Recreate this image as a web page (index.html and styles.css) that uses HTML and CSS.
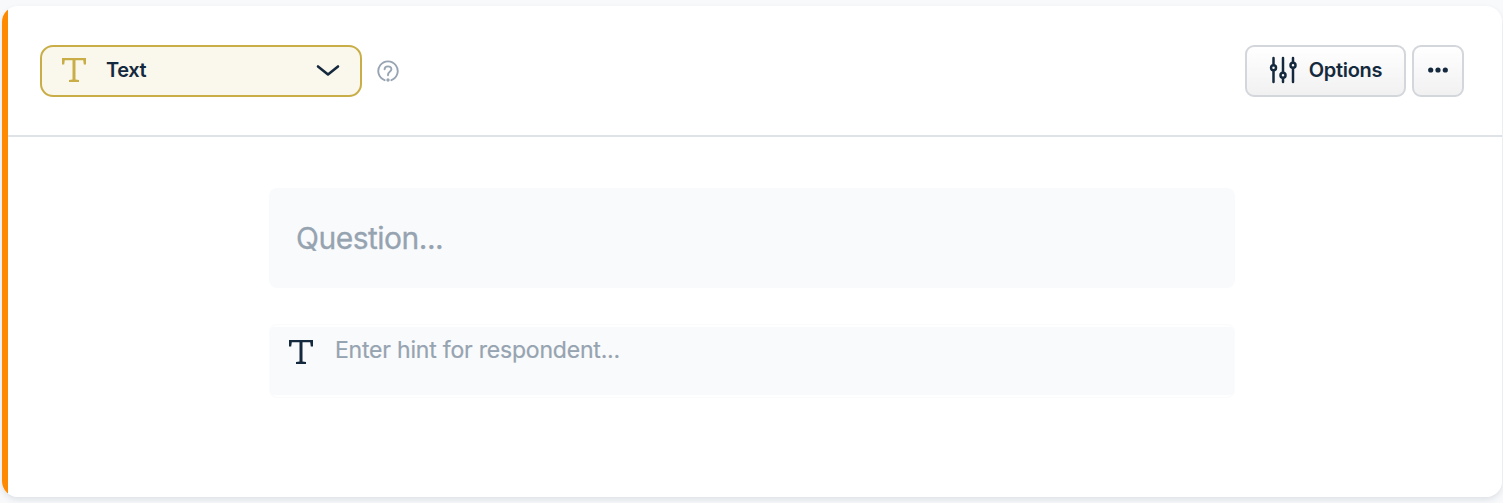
FILE: index.html
```html
<!doctype html>
<html lang="en">

<head>
    <meta charset="UTF-8" />
    <meta name="viewport" content="width=device-width, initial-scale=1.0" />
    <title>Question editor</title>
    <link rel="stylesheet" href="styles.css">
</head>

<body>
    <div class="question-card">
        <!-- header -->
        <div class="card-header">
            <button type="button" class="type-select">
                <svg class="type-icon" width="26" height="26" viewBox="0 0 26 26">
                    <path d="M1 1H25V7.5H22.8L22.2 3.2H14.5V22.6L18 23V25H8V23L11.5 22.6V3.2H3.8L3.2 7.5H1Z" />
                </svg>
                <span class="type-label">Text</span>
                <svg class="chevron" width="24" height="14" viewBox="0 0 24 14">
                    <path d="M2 2.5L12 10.5L22 2.5" />
                </svg>
            </button>
            <svg class="help-icon" width="22" height="22" viewBox="0 0 22 22">
                <path d="M7.6 20.2A9.7 9.7 0 1 1 14.4 20.2" />
                <path d="M7.6 9.2C7.6 5.4 14.4 5.4 14.4 9.2C14.4 11.8 11 11.4 11 15.2" />
                <circle cx="11" cy="20" r="1.7" />
            </svg>
            <div class="header-actions">
                <button type="button" class="btn btn-options">
                    <svg class="sliders-icon" width="28" height="28" viewBox="0 0 28 28">
                        <path d="M4.5 2V9M4.5 14.4V26M14 2V16.5M14 22V26M24 2V6.5M24 12V26" />
                        <circle cx="4.5" cy="11.7" r="2.5" />
                        <circle cx="14" cy="19.2" r="2.5" />
                        <circle cx="24" cy="9.3" r="2.5" />
                    </svg>
                    <span>Options</span>
                </button>
                <button type="button" class="btn btn-more" aria-label="More">
                    <svg width="20" height="6" viewBox="0 0 20 6">
                        <circle cx="2.7" cy="3" r="2.6" />
                        <circle cx="10" cy="3" r="2.6" />
                        <circle cx="17.3" cy="3" r="2.6" />
                    </svg>
                </button>
            </div>
        </div>
        <!-- fields -->
        <div class="card-body">
            <div class="field-question" role="textbox">Question...</div>
            <div class="field-hint">
                <svg class="type-icon" width="26" height="26" viewBox="0 0 26 26">
                    <path d="M1 1H25V7.5H22.8L22.2 3.2H14.5V22.6L18 23V25H8V23L11.5 22.6V3.2H3.8L3.2 7.5H1Z" />
                </svg>
                <div class="hint-text" role="textbox">Enter hint for respondent...</div>
            </div>
        </div>
    </div>
</body>

</html>
```

FILE: styles.css
```css
*,
*::before,
*::after {
    box-sizing: border-box;
}

body {
    margin: 0;
    height: 503px;
    padding: 6px 1px 6px 2px;
    overflow: hidden;
    background: #f8f9fb;
    font-family: Inter, "Liberation Sans", sans-serif;
    color: #14293d;
}

svg {
    display: block;
    flex: none;
    fill: none;
    stroke: currentColor;
    stroke-width: 2;
}

.question-card {
    height: 491px;
    background: linear-gradient(to right, #ff8a00 6px, #fff 6px);
    border-radius: 16px;
    box-shadow: 0 3px 6px rgba(20, 41, 61, 0.11);
    overflow: hidden;
    padding-left: 6px;
}

.card-header {
    display: flex;
    align-items: center;
    height: 131px;
    padding: 0 38px 0 32px;
    border-bottom: 2px solid #dfe3e8;
}

.type-select {
    display: flex;
    align-items: center;
    width: 322px;
    height: 52px;
    padding: 0 20px 0 19px;
    border: 2px solid #c9ae48;
    border-radius: 13px;
    background: #faf7ec;
    color: inherit;
    font: inherit;
}

.type-icon {
    fill: currentColor;
    stroke: none;
}

.type-select .type-icon {
    color: #c9ae48;
    margin-bottom: 2px;
}

.type-label {
    flex: 1;
    margin-left: 19px;
    padding-bottom: 1px;
    text-align: left;
    font-size: 20px;
    font-weight: 600;
    letter-spacing: -0.4px;
}

.chevron {
    stroke-width: 2.6;
    stroke-linecap: round;
    stroke-linejoin: round;
}

.help-icon {
    margin-left: 15px;
    color: #98a5b3;
    stroke-width: 1.9;
    stroke-linecap: round;
}

.help-icon circle {
    fill: currentColor;
    stroke: none;
}

.header-actions {
    display: flex;
    gap: 6px;
    margin-left: auto;
}

.btn {
    display: flex;
    align-items: center;
    justify-content: center;
    height: 52px;
    padding: 0 0 2px;
    border: 2px solid #d3d6db;
    border-radius: 9px;
    background: linear-gradient(#fff, #f1f1f1);
    color: inherit;
    font: inherit;
    font-size: 20px;
    font-weight: 600;
    letter-spacing: -0.3px;
}

.btn-options {
    width: 161px;
    gap: 12px;
}

.sliders-icon {
    stroke-width: 2.5;
    stroke-linecap: round;
}

.btn-more {
    width: 52px;
}

.btn-more circle {
    fill: currentColor;
    stroke: none;
}

.card-body {
    width: 966px;
    margin: 0 0 0 261px;
    padding-top: 51px;
}

.field-question {
    height: 100px;
    padding: 0 27px;
    border-radius: 8px;
    background: #f9fafc;
    color: #96a3b0;
    font-size: 30px;
    line-height: 100px;
    letter-spacing: -0.5px;
    -webkit-text-stroke: 0.3px currentColor;
}

.field-hint {
    display: flex;
    height: 74px;
    margin-top: 36px;
    padding: 12px 18px;
    border: 1px solid #fafbfc;
    border-radius: 8px;
    background: linear-gradient(#fff 2px, #f9fafc 2px, #f9fafc 70px, #fff 70px);
}

.field-hint .type-icon {
    margin-top: 2px;
}

.hint-text {
    margin-left: 21px;
    color: #96a3b0;
    font-size: 23px;
    line-height: 26px;
    letter-spacing: -0.2px;
    -webkit-text-stroke: 0.2px currentColor;
}
```
